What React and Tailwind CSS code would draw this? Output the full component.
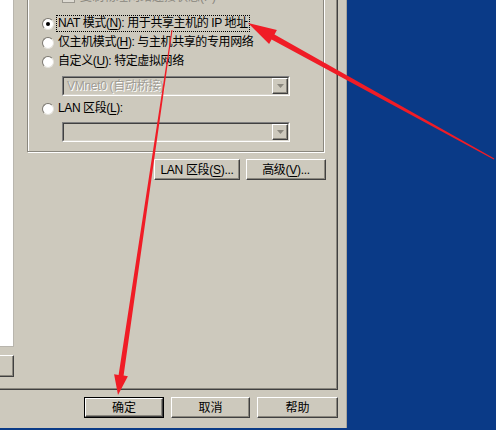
const btn =
  'flex items-center justify-center h-[21px] bg-[#cdc9bd] border border-t-white border-l-white border-r-[#404040] border-b-[#404040] shadow-[inset_-1px_-1px_0_#8a877e] text-[12px] text-black';

function U({ children }) {
  return <span className="underline underline-offset-[2px]">{children}</span>;
}

function Radio({ checked, children, focus }) {
  return (
    <div className="flex items-center h-[19px]">
      <span className="w-[12px] h-[12px] rounded-full bg-white border border-t-[#7a776f] border-l-[#7a776f] border-r-[#e4e2dc] border-b-[#e4e2dc] flex items-center justify-center shrink-0">
        {checked && <span className="w-[4px] h-[4px] rounded-full bg-black" />}
      </span>
      <span
        className={`ml-[3px] px-[1px] leading-[15px] whitespace-nowrap tracking-[-0.4px] ${
          focus ? 'outline outline-1 outline-dotted outline-black' : ''
        }`}
      >
        {children}
      </span>
    </div>
  );
}

function Combo({ text }) {
  return (
    <div className="ml-[20px] w-[228px] h-[20px] flex border border-t-[#808080] border-l-[#808080] border-r-white border-b-white">
      <div className="flex-1 flex items-center border border-t-[#404040] border-l-[#404040] border-r-[#d8d5cc] border-b-[#d8d5cc] pl-[3px]">
        <span className="flex-1 text-[#a09d96] [text-shadow:1px_1px_0_#fff] whitespace-nowrap tracking-[-0.3px]">{text}</span>
        <span className="w-[16px] h-[16px] border border-t-white border-l-white border-r-[#404040] border-b-[#404040] shadow-[inset_-1px_-1px_0_#8a877e] flex items-center justify-center">
          <svg width="7" height="4" viewBox="0 0 7 4">
            <path d="M0 0h7L3.5 4z" fill="#8a877e" />
          </svg>
        </span>
      </div>
    </div>
  );
}

export default function App() {
  return (
    <div className="relative w-[496px] h-[430px] bg-[#0a3a87] overflow-hidden font-['Liberation_Sans','Noto_Sans_CJK_SC',sans-serif] text-[12px] text-black">
      {/* dialog */}
      <div className="w-[347px] h-[428px] bg-[#cdc9bd] border-r border-[#a8a59c] flex flex-col">
        {/* tab page */}
        <div className="w-[338px] h-[390px] border-r border-b border-[#404040] shadow-[inset_-1px_-1px_0_#8a877e] flex overflow-hidden">
          {/* hardware list + button */}
          <div className="w-[14px] flex flex-col shrink-0">
            <div className="h-[347px] bg-white border-r border-b border-[#b8b5ad]" />
            <div className={`${btn} mt-[8px] h-[22px] border-l-0`} />
          </div>

          <div className="flex-1 pl-[13px] flex flex-col">
            {/* network connection group */}
            <div className="w-[297px] mt-[-30px] pt-[16px] pb-[9px] pl-[14px] border border-[#8a877e] shadow-[inset_1px_1px_0_#fff,1px_1px_0_#fff]">
              <div className="flex items-center h-[19px] pl-[20px]">
                <span className="w-[13px] h-[13px] bg-[#dedbd3] border border-[#9a978f]" />
                <span className="ml-[5px] text-[#8a877e]">复制物理网络连接状态(P)</span>
              </div>
              <div className="mt-[8px]">
                <Radio checked focus>
                  NAT 模式(<U>N</U>): 用于共享主机的 IP 地址
                </Radio>
              </div>
              <Radio>
                仅主机模式(<U>H</U>): 与主机共享的专用网络
              </Radio>
              <Radio>
                自定义(<U>U</U>): 特定虚拟网络
              </Radio>
              <div className="mt-[5px]">
                <Combo text="VMnet0 (自动桥接)" />
              </div>
              <div className="mt-[3px]">
                <Radio>
                  LAN 区段(<U>L</U>):
                </Radio>
              </div>
              <div className="mt-[4px]">
                <Combo text="" />
              </div>
            </div>

            <div className="w-[299px] mt-[7px] flex justify-end gap-[6px]">
              <div className={`${btn} w-[86px] tracking-[-0.3px]`}>
                LAN 区段(<U>S</U>)...
              </div>
              <div className={`${btn} w-[80px] tracking-[-0.3px]`}>
                高级(<U>V</U>)...
              </div>
            </div>
          </div>
        </div>

        {/* dialog buttons */}
        <div className="mt-[7px] pl-[84px] flex gap-[7px]">
          <div className={`${btn} w-[80px] outline outline-1 outline-black -outline-offset-1 border-2 border-t-white border-l-white`}>
            确定
          </div>
          <div className={`${btn} w-[79px]`}>取消</div>
          <div className={`${btn} w-[81px]`}>帮助</div>
        </div>
      </div>

      {/* red annotation arrows */}
      <svg className="absolute inset-0 pointer-events-none" width="496" height="430" viewBox="0 0 496 430">
        <g fill="#f01c26">
          <polygon points="248,23 276.9,30.0 274.5,34.4 494.3,158.6 493.7,159.4 271.6,39.6 269.1,44.0" />
          <polygon points="118,395 127.9,376.3 123.6,375.6 172.5,30.1 171.5,29.9 118.6,374.9 114.1,374.2" />
        </g>
      </svg>
    </div>
  );
}
